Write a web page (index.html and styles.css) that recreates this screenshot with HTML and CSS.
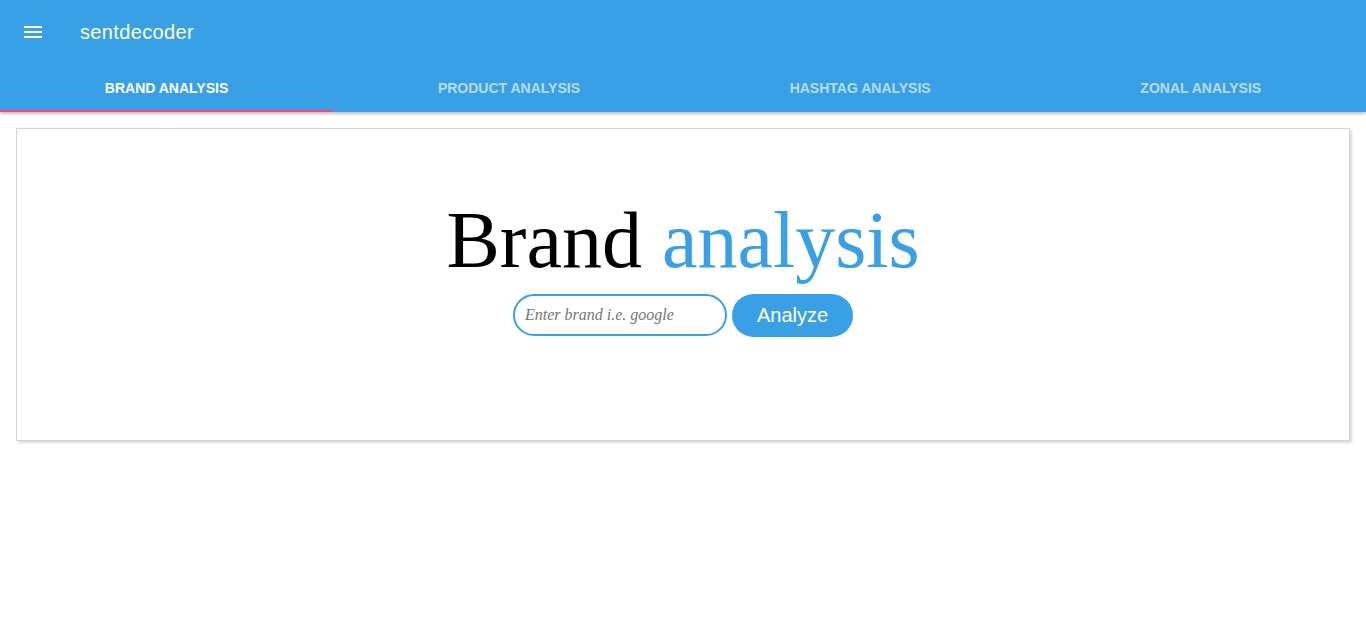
FILE: index.html
```html
<!DOCTYPE html>
<html>
<head>
<meta charset="utf-8">
<title>sentdecoder</title>
<link rel="stylesheet" href="styles.css">
</head>
<body>
<header class="appbar">
  <div class="toolbar">
    <button class="menu-btn" aria-label="menu">
      <svg width="24" height="24" viewBox="0 0 24 24"><path d="M3 18h18v-2H3v2zm0-5h18v-2H3v2zm0-7v2h18V6H3z" fill="#fff"/></svg>
    </button>
    <span class="title">sentdecoder</span>
  </div>
  <nav class="tabs">
    <a class="tab active">BRAND ANALYSIS</a>
    <a class="tab">PRODUCT ANALYSIS</a>
    <a class="tab">HASHTAG ANALYSIS</a>
    <a class="tab">ZONAL ANALYSIS</a>
  </nav>
</header>
<main class="content">
  <section class="card">
    <h1 class="heading">Brand <span class="accent">analysis</span></h1>
    <form class="search">
      <input class="brand-input" type="text" placeholder="Enter brand i.e. google">
      <button class="analyze" type="button">Analyze</button>
    </form>
  </section>
</main>
</body>
</html>
```
FILE: styles.css
```css
* { box-sizing: border-box; }
html, body { margin: 0; padding: 0; background: #fff; }
body { font-family: "Liberation Sans", Arial, sans-serif; }

.appbar {
  background: #39a0e5;
  color: #fff;
  box-shadow: 0 2px 3px rgba(0,0,0,0.25);
  position: relative;
  z-index: 1;
}
.toolbar {
  height: 64px;
  display: flex;
  align-items: center;
  padding-left: 21px;
}
.menu-btn {
  background: none;
  border: 0;
  padding: 0;
  width: 24px;
  height: 24px;
  display: flex;
  cursor: pointer;
}
.title {
  margin-left: 35px;
  font-size: 20px;
  letter-spacing: 0.35px;
  color: #fff;
}
.tabs {
  display: flex;
  height: 48px;
}
.tab {
  flex: 1 1 auto;
  display: flex;
  align-items: center;
  justify-content: center;
  font-size: 14px;
  font-weight: bold;
  white-space: nowrap;
  color: rgba(255,255,255,0.65);
  border-bottom: 2px solid transparent;
  padding-top: 1px;
}
.tab.active {
  color: #fff;
  border-bottom-color: #ff4081;
}

.content {
  padding: 16px;
}
.card {
  border: 1px solid #d4d4d4;
  box-shadow: 2px 2px 2px rgba(0,0,0,0.14);
  height: 313px;
  padding-top: 66px;
  text-align: center;
}
.heading {
  margin: 0;
  font-family: "Liberation Serif", "Times New Roman", serif;
  font-weight: normal;
  font-size: 80px;
  line-height: normal;
  color: #000;
}
.accent { color: #39a0e5; }
.search {
  margin-top: 8px;
  display: flex;
  justify-content: center;
  gap: 5px;
}
.brand-input {
  width: 214px;
  height: 42px;
  border: 2px solid #39a0e5;
  border-radius: 21px;
  padding: 0 10px;
  font-family: "Liberation Serif", "Times New Roman", serif;
  font-size: 16px;
  outline: none;
}
.brand-input::placeholder {
  font-style: italic;
  color: #757575;
}
.analyze {
  width: 121px;
  height: 43px;
  border: 0;
  border-radius: 22px;
  background: #39a0e5;
  color: #fff;
  font-family: "Liberation Sans", Arial, sans-serif;
  font-size: 20px;
}
```
